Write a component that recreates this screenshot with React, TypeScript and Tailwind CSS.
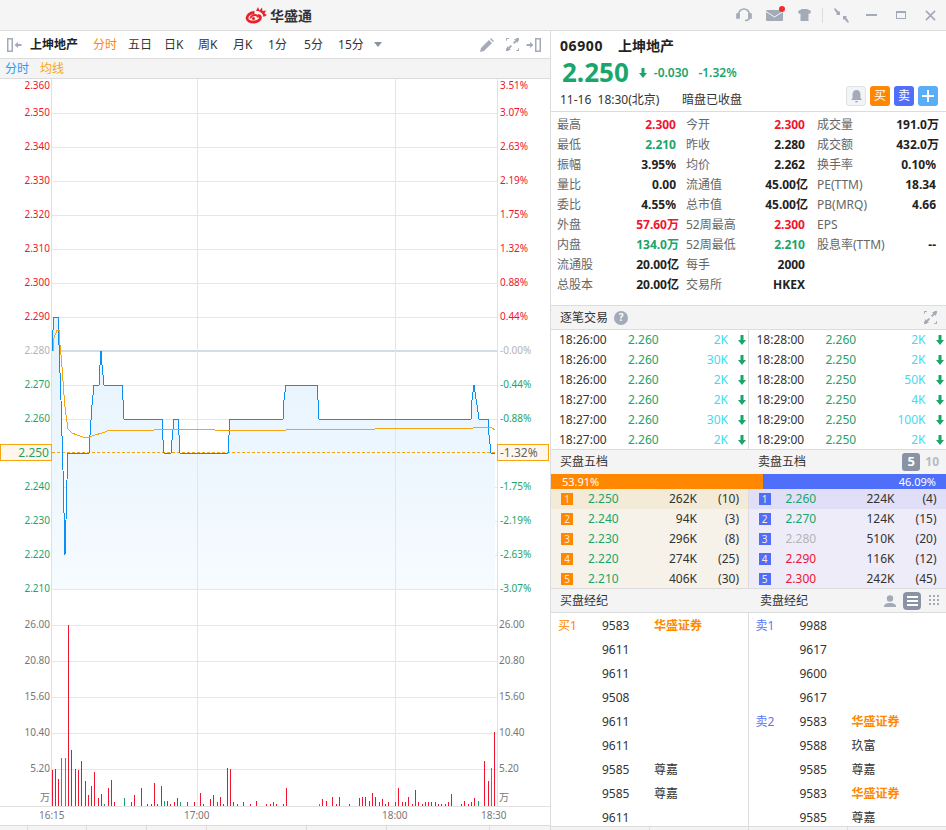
const RED = '#f0142f';
const GREEN = '#1aa56b';
const ORANGE = '#ff8800';
const BLUE = '#4f6ffb';

const priceLabels = [
  ['2.360', 86, RED], ['2.350', 113, RED], ['2.340', 147, RED], ['2.330', 181, RED], ['2.320', 215, RED],
  ['2.310', 249, RED], ['2.300', 283, RED], ['2.290', 317, RED], ['2.280', 351, '#b4b4b4'], ['2.270', 385, GREEN],
  ['2.260', 419, GREEN], ['2.240', 487, GREEN], ['2.230', 521, GREEN], ['2.220', 555, GREEN], ['2.210', 589, GREEN],
] as const;

const pctLabels = [
  ['3.51%', 86, RED], ['3.07%', 113, RED], ['2.63%', 147, RED], ['2.19%', 181, RED], ['1.75%', 215, RED],
  ['1.32%', 249, RED], ['0.88%', 283, RED], ['0.44%', 317, RED], ['-0.00%', 351, '#b4b4b4'], ['-0.44%', 385, GREEN],
  ['-0.88%', 419, GREEN], ['-1.75%', 487, GREEN], ['-2.19%', 521, GREEN], ['-2.63%', 555, GREEN], ['-3.07%', 589, GREEN],
] as const;

const volLabels = [['26.00', 625], ['20.80', 661], ['15.60', 697], ['10.40', 733], ['5.20', 769], ['万', 798]] as const;

const pricePath =
  '52,351 53,330 54,317 58,317 59,345 61,400 63,470 65,555 66,520 67,480 68,453 89,453 90,435 92,405 94,385 99,385 100,365 101,351 102,365 104,385 122,385 123,400 124,419 162,419 163,440 164,453 171,453 172,440 174,419 178,419 179,435 180,453 228,453 229,435 230,419 283,419 284,400 286,385 317,385 318,400 319,419 471,419 472,400 474,385 475,392 477,405 479,419 488,419 489,435 491,453 495,453';

const avgPath =
  '53,351 54,338 57,330 59,330 60,345 61,355 62,367 64,395 65,407 67,422 68,429 72,433 77,435 83,437 88,438 92,436 95,435 102,433 110,430 154,430 155,429 214,429 215,430 228,430 229,431 230,430 286,430 287,429 375,429 376,428 473,428 474,427 489,427 492,428 495,430';

// x, bar height above the baseline, green when true
const bars: [number, number, boolean?][] = [
  [52, 36], [55, 37], [58, 27], [61, 48, true], [65, 48, true], [68, 181], [71, 56], [75, 37], [78, 36], [81, 45], [85, 25], [88, 11], [91, 20], [94, 34],
  [98, 8], [101, 12], [104, 2, true], [108, 18], [111, 26], [114, 4], [124, 8, true], [131, 4], [134, 11], [141, 18], [147, 2], [151, 2], [154, 23], [157, 2],
  [161, 20], [164, 5, true], [167, 5], [170, 2], [174, 4], [177, 8], [180, 4, true], [187, 4], [194, 4], [200, 13], [203, 2], [210, 7], [213, 11], [217, 4],
  [220, 9], [223, 2], [227, 38], [230, 37], [233, 4], [237, 2], [243, 4], [250, 2], [256, 5], [266, 2], [270, 2], [273, 4], [276, 2], [283, 2], [286, 18],
  [319, 2, true], [322, 7], [326, 5], [332, 9], [336, 2], [339, 9], [349, 2], [359, 8], [362, 9], [365, 9], [369, 5], [372, 13], [375, 9], [379, 4], [382, 7],
  [385, 2], [388, 4], [395, 4], [398, 18], [402, 4], [405, 4], [408, 9], [412, 2], [415, 16], [418, 4], [422, 2], [425, 4], [428, 4], [431, 4], [435, 4],
  [438, 2], [441, 2], [445, 2], [448, 4], [451, 12], [461, 2], [464, 5], [468, 2], [471, 4], [474, 8], [478, 5, true], [484, 45], [488, 25], [491, 38, true], [494, 74],
];

const stats = [
  [['最高', '2.300', RED], ['今开', '2.300', RED], ['成交量', '191.0万', '']],
  [['最低', '2.210', GREEN], ['昨收', '2.280', ''], ['成交额', '432.0万', '']],
  [['振幅', '3.95%', ''], ['均价', '2.262', ''], ['换手率', '0.10%', '']],
  [['量比', '0.00', ''], ['流通值', '45.00亿', ''], ['PE(TTM)', '18.34', '']],
  [['委比', '4.55%', ''], ['总市值', '45.00亿', ''], ['PB(MRQ)', '4.66', '']],
  [['外盘', '57.60万', RED], ['52周最高', '2.300', RED], ['EPS', '', '']],
  [['内盘', '134.0万', GREEN], ['52周最低', '2.210', GREEN], ['股息率(TTM)', '--', '']],
  [['流通股', '20.00亿', ''], ['每手', '2000', ''], ['', '', '']],
  [['总股本', '20.00亿', ''], ['交易所', 'HKEX', ''], ['', '', '']],
];

const tradesLeft = [['18:26:00', '2.260', '2K'], ['18:26:00', '2.260', '30K'], ['18:26:00', '2.260', '2K'], ['18:27:00', '2.260', '2K'], ['18:27:00', '2.260', '30K'], ['18:27:00', '2.260', '2K']];
const tradesRight = [['18:28:00', '2.260', '2K'], ['18:28:00', '2.250', '2K'], ['18:28:00', '2.250', '50K'], ['18:29:00', '2.250', '4K'], ['18:29:00', '2.250', '100K'], ['18:29:00', '2.250', '2K']];

const bids = [['2.250', '262K', '(10)', GREEN], ['2.240', '94K', '(3)', GREEN], ['2.230', '296K', '(8)', GREEN], ['2.220', '274K', '(25)', GREEN], ['2.210', '406K', '(30)', GREEN]];
const asks = [['2.260', '224K', '(4)', GREEN], ['2.270', '124K', '(15)', GREEN], ['2.280', '510K', '(20)', '#b4b4b4'], ['2.290', '116K', '(12)', RED], ['2.300', '242K', '(45)', RED]];

const buyBrokers = [['买1', '9583', '华盛证券'], ['', '9611', ''], ['', '9611', ''], ['', '9508', ''], ['', '9611', ''], ['', '9611', ''], ['', '9585', '尊嘉'], ['', '9585', '尊嘉'], ['', '9611', '']];
const sellBrokers = [['卖1', '9988', ''], ['', '9617', ''], ['', '9600', ''], ['', '9617', ''], ['卖2', '9583', '华盛证券'], ['', '9588', '玖富'], ['', '9585', '尊嘉'], ['', '9583', '华盛证券'], ['', '9585', '尊嘉']];

function DownArrow() {
  return (
    <svg width="8" height="10" viewBox="0 0 8 10" fill={GREEN}>
      <path d="M2.500 0h3v5H8L4 10 0 5h2.500z" />
    </svg>
  );
}

function ExpandIcon({ size = 14 }: { size?: number }) {
  return (
    <svg width={size} height={size} viewBox="0 0 14 14" fill="#a3abb8">
      <path d="M0 0h3v1H1v2H0zM11 0h3v3h-1V1h-2zM0 11h1v2h2v1H0zM13 11h1v3h-3v-1h2z" />
      <path d="M13 1v4.500L11.500 4 9 6.500 7.500 5 10 2.500 8.500 1zM1 13V8.500L2.500 10 5 7.500 6.500 9 4 11.500 5.500 13z" />
    </svg>
  );
}

function Logo() {
  return (
    <svg width="22" height="18" viewBox="0 0 22 18" fill="none">
      <path d="M9.500 6.500C5 6.500 2 9.500 2 12c0 2.500 3 4 6.500 4 3.500 0 7-1.800 7-4.500 0-1.600-1.500-2-2.500-2.200" stroke="#e8232c" strokeWidth="2.800" />
      <path d="M5.500 12.500c0-2 2.500-3.500 4.500-3.500s2.800 1 2.500 2.500" stroke="#e8232c" strokeWidth="1.800" />
      <circle cx="8.500" cy="12.500" r="1.500" fill="#e8232c" />
      <path d="M13 1l1.500 3.500L17 1.500l.5 3.500L21 4.500l-1.500 3L22 9l-3.500 2c-.5-3-2-5-5.500-6L11 5z" fill="#e8232c" />
    </svg>
  );
}

function PriceChart() {
  return (
    <svg viewBox="0 79 550 746" className="block h-[746px] w-[550px]" fontSize="10">
      <defs>
        <linearGradient id="area" x1="0" y1="0" x2="0" y2="1">
          <stop offset="0" stopColor="#e4f2fd" />
          <stop offset="1" stopColor="#f6fbff" />
        </linearGradient>
      </defs>

      {[113, 147, 181, 215, 249, 283, 317, 385, 419, 487, 521, 555, 589, 625, 661, 697, 733, 769].map((y) => (
        <line key={y} x1="52" x2="497" y1={y + 0.5} y2={y + 0.5} stroke="#e6e6e6" />
      ))}
      <line x1="52" x2="497" y1="351" y2="351" stroke="#d3dde8" strokeWidth="2" />

      <polygon points={`52,589 ${pricePath} 495,589`} fill="url(#area)" />

      {[197.5, 395.5].map((x) => (
        <line key={x} x1={x} x2={x} y1="79" y2="806" stroke="#e2e6ea" />
      ))}
      <line x1="51.500" x2="51.500" y1="79" y2="806" stroke="#e0e0e0" />
      <line x1="497.500" x2="497.500" y1="79" y2="806" stroke="#e0e0e0" />
      <line x1="0" x2="550" y1="806.500" y2="806.500" stroke="#e0e0e0" />

      <line x1="52" x2="497" y1="452.500" y2="452.500" stroke="#f7a50e" strokeDasharray="3 2" />
      <polyline points={pricePath} fill="none" stroke="#0b8ff2" strokeWidth="1" shapeRendering="crispEdges" />
      <polyline points={avgPath} fill="none" stroke="#f7a50e" strokeWidth="1" shapeRendering="crispEdges" />

      <rect x="0.500" y="444.500" width="51" height="16" fill="#fff6ed" stroke="#f7a50e" />
      <rect x="497.500" y="444.500" width="51" height="16" fill="#fff6ed" stroke="#f7a50e" />
      <text x="49" y="457" textAnchor="end" fontSize="12" fill={GREEN}>2.250</text>
      <text x="500" y="457" fontSize="12" fill="#666">-1.32%</text>

      {priceLabels.map(([t, y, c]) => (
        <text key={t} x="50" y={y + 3} textAnchor="end" fill={c}>{t}</text>
      ))}
      {pctLabels.map(([t, y, c]) => (
        <text key={t} x="500" y={y + 3} fill={c}>{t}</text>
      ))}
      {volLabels.map(([t, y]) => (
        <text key={`l${t}`} x="50" y={y + 3} textAnchor="end" fill="#777">{t}</text>
      ))}
      {volLabels.map(([t, y]) => (
        <text key={`r${t}`} x="499" y={y + 3} fill="#777">{t}</text>
      ))}

      {bars.map(([x, h, down]) => (
        <rect key={x} x={x} y={806 - h} width="1" height={h} fill={down ? GREEN : RED} />
      ))}

      <text x="39" y="819" fontSize="10" fill="#777">16:15</text>
      <text x="184" y="819" fontSize="10" fill="#777">17:00</text>
      <text x="382" y="819" fontSize="10" fill="#777">18:00</text>
      <text x="481" y="819" fontSize="10" fill="#777">18:30</text>
    </svg>
  );
}

function TopBar() {
  return (
    <div className="relative flex h-[31px] shrink-0 items-center border-b border-[#dcdcdc] bg-[#f5f5f5]">
      <div className="ml-[245px] flex items-center gap-[3px]">
        <Logo />
        <span className="text-[14px] font-bold text-[#333]">华盛通</span>
      </div>
      <div className="ml-auto flex items-center text-[#a3abb8]">
        <svg width="16" height="16" viewBox="0 0 16 16" fill="none" stroke="currentColor" strokeWidth="1.600" className="mr-[14px]">
          <path d="M2.500 10V7.500a5.500 5.500 0 0 1 11 0V10" />
          <path d="M13.500 10c0 2.500-2 3.500-4.500 3.500" />
          <rect x="1" y="7" width="2" height="4" fill="currentColor" />
          <rect x="13" y="7" width="2" height="4" fill="currentColor" />
        </svg>
        <div className="relative mr-[15px] h-[11px] w-[17px] rounded-[1px] bg-[#a3abb8]">
          <svg width="17" height="11" viewBox="0 0 17 11" fill="none" stroke="#f5f5f5" strokeWidth="1" className="block">
            <path d="M0 1.500l8.500 5.500 8.500-5.500" />
          </svg>
          <span className="absolute right-[-2px] top-[-4px] h-[6px] w-[6px] rounded-full bg-[#f52c2c]" />
        </div>
        <svg width="13" height="12" viewBox="0 0 13 12" fill="currentColor" className="mr-[11px]">
          <path d="M4 0h5l4 2-1 3-1.500-.5V12h-8V4.500L1 5 0 2z" />
        </svg>
        <span className="mr-[11px] h-[15px] w-px bg-[#dcdcdc]" />
        <svg width="15" height="15" viewBox="0 0 15 15" fill="currentColor" className="mr-[17px]">
          <path d="M0 1l1-1 4 4 1-1v4H2l1-1zM15 14l-1 1-4-4-1 1V8h4l-1 1z" />
        </svg>
        <span className="mr-[19px] h-[2px] w-[11px] bg-[#a3abb8]" />
        <span className="mr-[19px] h-[8px] w-[10px] border border-t-2 border-[#a3abb8]" />
        <svg width="11" height="11" viewBox="0 0 12 12" stroke="currentColor" strokeWidth="1.800" className="mr-[10px]">
          <path d="M1 1l10 10M11 1L1 11" />
        </svg>
      </div>
    </div>
  );
}

function LeftPanel() {
  const tabs = [['五日', 'w-[36px]'], ['日K', 'w-[34px]'], ['周K', 'w-[35px]'], ['月K', 'w-[35px]'], ['1分', 'w-[36px]'], ['5分', 'w-[34px]'], ['15分', 'w-[33px]']];
  return (
    <div className="flex h-full w-[551px] shrink-0 flex-col border-r border-[#dcdcdc]">
      <div className="flex h-[28px] shrink-0 items-center border-b border-[#dcdcdc] pl-[7px] pr-[9px] text-[12px] text-[#333]">
        <svg width="15" height="14" viewBox="0 0 15 14" fill="#a3abb8" className="mr-[8px]">
          <path d="M0 0h6v14H0zM1.500 1.500v11h3v-11z" fillRule="evenodd" />
          <path d="M7.500 7L11 4V6h3.500V8H11v2z" />
        </svg>
        <span className="mr-[15px] font-bold text-[#222]">上坤地产</span>
        <span className="w-[35px] text-[#ff8800]">分时</span>
        {tabs.map(([t, w]) => (
          <span key={t} className={w}>{t}</span>
        ))}
        <span className="ml-[3px] h-0 w-0 border-x-[4px] border-t-[5px] border-x-transparent border-t-[#8a93a3]" />
        <svg width="14" height="14" viewBox="0 0 14 14" fill="#a3abb8" className="ml-auto mr-[12px]">
          <path d="M0 14l1-4 8-8 3 3-8 8zM10 1l1-1 3 3-1 1z" />
        </svg>
        <span className="mr-[7px]"><ExpandIcon size={13} /></span>
        <svg width="15" height="14" viewBox="0 0 15 14" fill="#a3abb8">
          <path d="M9 0h6v14H9zM10.500 1.500v11h3v-11z" fillRule="evenodd" />
          <path d="M7.500 7L4 4V6H.5V8H4v2z" />
        </svg>
      </div>
      <div className="flex h-[20px] shrink-0 items-center gap-[11px] border-b border-[#dcdcdc] bg-[#f4f4f4] pl-[5px] text-[12px]">
        <span className="text-[#2a9bf5]">分时</span>
        <span className="text-[#f7a50e]">均线</span>
      </div>
      <PriceChart />
      <div className="flex min-h-0 flex-1 border-t border-[#dcdcdc] bg-[#f4f4f4]">
        {['w-[28px]', 'w-[59px]', 'w-[60px]', 'w-[60px]', 'w-[100px]', 'w-[80px]', 'w-[103px]'].map((w) => (
          <span key={w} className={`${w} border-r border-[#dcdcdc]`} />
        ))}
      </div>
    </div>
  );
}

function SectionHead({ children }: { children: React.ReactNode }) {
  return <div className="flex shrink-0 items-center border-b border-[#dcdcdc] bg-[#f4f4f4] text-[12px] text-[#333]">{children}</div>;
}

function Trades({ rows, first }: { rows: string[][]; first?: boolean }) {
  return (
    <div className={`w-[198px] ${first ? 'border-r border-[#dcdcdc] pl-[8px]' : 'pl-[8px]'}`}>
      {rows.map((r, i) => (
        <div key={i} className="flex h-[20px] items-center text-[12px]">
          <span className="w-[69px] text-[#333]">{r[0]}</span>
          <span className="w-[40px] text-[#1aa56b]">{r[1]}</span>
          <span className="w-[60px] text-right text-[#3fdcf0]">{r[2]}</span>
          <span className="ml-[10px]"><DownArrow /></span>
        </div>
      ))}
    </div>
  );
}

function Book({ rows, sell }: { rows: string[][]; sell?: boolean }) {
  return (
    <div className={sell ? 'w-[198px] bg-[#eeecf9]' : 'w-[198px] border-r border-[#dcdcdc] bg-[#f6f2ea]'}>
      {rows.map((r, i) => (
        <div
          key={i}
          className={`flex h-[20px] items-center pl-[10px] text-[12px] text-[#333] ${i === 0 ? (sell ? 'bg-[#e1def7]' : 'bg-[#f3ebd8]') : ''}`}
        >
          <span
            className={`flex h-[12px] w-[12px] items-center justify-center text-[10px] text-[#ffe9cc] ${sell ? 'bg-[#4f6ffb]' : 'bg-[#ff8800]'}`}
          >
            {i + 1}
          </span>
          <span className="ml-[15px] w-[40px]" style={{ color: r[3] }}>{r[0]}</span>
          <span className="w-[69px] text-right">{r[1]}</span>
          <span className="w-[42px] text-right">{r[2]}</span>
        </div>
      ))}
    </div>
  );
}

function Brokers({ rows, sell }: { rows: string[][]; sell?: boolean }) {
  return (
    <div className={sell ? 'w-[198px] pl-[7px] pt-[1px]' : 'w-[198px] border-r border-[#dcdcdc] pl-[7px] pt-[1px]'}>
      {rows.map((r, i) => (
        <div key={i} className="flex h-[24px] items-center text-[12px] text-[#333]">
          <span className={`w-[44px] ${sell ? 'text-[#5a78fb]' : 'text-[#ff8800]'}`}>{r[0]}</span>
          <span className="w-[52px]">{r[1]}</span>
          <span className={r[2] === '华盛证券' ? 'font-bold text-[#ff8800]' : ''}>{r[2]}</span>
        </div>
      ))}
    </div>
  );
}

const statPad = ['pr-[10px]', 'pr-[12px]', 'pr-[2px]'];

function RightPanel() {
  return (
    <div className="flex h-full min-w-0 flex-1 flex-col">
      <div className="relative h-[81px] shrink-0 border-b border-[#dcdcdc] pl-[9px]">
        <div className="flex h-[29px] items-center gap-[15px] text-[14px] font-bold text-[#222]">
          <span className="tracking-[0.6px]">06900</span>
          <span>上坤地产</span>
        </div>
        <div className="-mt-[1px] flex h-[25px] items-center pl-[2px] text-[#1aa56b]">
          <span className="text-[26px] font-bold leading-none">2.250</span>
          <span className="ml-[10px] mr-[7px] mt-[3px]"><DownArrow /></span>
          <span className="mt-[3px] text-[12px] font-semibold">-0.030</span>
          <span className="ml-[10px] mt-[3px] text-[12px] font-semibold">-1.32%</span>
        </div>
        <div className="mt-[6px] flex h-[20px] items-center text-[12px] text-[#333]">
          <span className="w-[122px]">11-16&nbsp; 18:30(北京)</span>
          <span>暗盘已收盘</span>
        </div>
        <div className="absolute right-[8px] top-[55px] flex gap-[4px]">
          <span className="flex h-[20px] w-[20px] items-center justify-center rounded-[3px] border border-[#dfe3e8] bg-[#f3f4f6]">
            <svg width="11" height="13" viewBox="0 0 11 13" fill="#a3abb8">
              <path d="M5.500 0C3 0 1.500 2 1.500 4.500V8L0 10h11L9.500 8V4.500C9.500 2 8 0 5.500 0zM4 11h3a1.500 1.500 0 0 1-3 0z" />
            </svg>
          </span>
          <span className="flex h-[20px] w-[20px] items-center justify-center rounded-[3px] bg-[#ff8800] text-[12px] text-white">买</span>
          <span className="flex h-[20px] w-[20px] items-center justify-center rounded-[3px] bg-[#4f6ffb] text-[12px] text-white">卖</span>
          <span className="flex h-[20px] w-[20px] items-center justify-center rounded-[3px] bg-[#5aaef8]">
            <svg width="12" height="12" viewBox="0 0 12 12" fill="white"><path d="M5 0h2v5h5v2H7v5H5V7H0V5h5z" /></svg>
          </span>
        </div>
      </div>

      <div className="h-[194px] shrink-0 border-b border-[#dcdcdc] pl-[6px] pt-[3px]">
        {stats.map((row, i) => (
          <div key={i} className="grid h-[20px] grid-cols-[129px_131px_121px] items-center text-[12px]">
            {row.map((c, j) => (
              <div key={j} className={`flex justify-between ${statPad[j]}`}>
                <span className="text-[#666]">{c[0]}</span>
                <span
                  className={`font-bold text-[#222] ${/[万亿]$/.test(c[1]) ? '-mr-[3px]' : ''}`}
                  style={c[2] ? { color: c[2] } : undefined}
                >
                  {c[1]}
                </span>
              </div>
            ))}
          </div>
        ))}
      </div>

      <SectionHead>
        <div className="flex h-[23px] w-full items-center pl-[9px] pr-[9px]">
          <span>逐笔交易</span>
          <span className="ml-[6px] flex h-[14px] w-[14px] items-center justify-center rounded-full bg-[#a3abb8] text-[10px] font-bold text-white">?</span>
          <span className="ml-auto"><ExpandIcon size={13} /></span>
        </div>
      </SectionHead>
      <div className="flex h-[120px] shrink-0 border-b border-[#dcdcdc]">
        <Trades rows={tradesLeft} first />
        <Trades rows={tradesRight} />
      </div>

      <div className="flex h-[24px] shrink-0 items-center bg-[#f4f4f4] pl-[9px] pr-[7px] text-[12px] text-[#333]">
        <span className="w-[198px]">买盘五档</span>
        <span>卖盘五档</span>
        <span className="ml-auto flex h-[18px] w-[18px] items-center justify-center rounded-[3px] bg-[#8a93a3] text-[13px] font-bold text-white">5</span>
        <span className="ml-[5px] text-[12px] font-bold text-[#b4bac4]">10</span>
      </div>
      <div className="flex h-[15px] shrink-0 text-[11px] leading-[15px] text-white">
        <span className="w-[212px] bg-[#ff8800] pl-[11px]">53.91%</span>
        <span className="flex-1 bg-[#4f6ffb] pr-[10px] text-right">46.09%</span>
      </div>
      <div className="flex h-[100px] shrink-0 border-b border-[#dcdcdc] bg-[#eeecf9]">
        <Book rows={bids} />
        <Book rows={asks} sell />
      </div>

      <SectionHead>
        <div className="flex h-[23px] w-full items-center pl-[9px] pr-[6px]">
          <span className="w-[200px]">买盘经纪</span>
          <span>卖盘经纪</span>
          <svg width="12" height="12" viewBox="0 0 12 12" fill="#a3abb8" className="ml-auto mr-[7px]">
            <circle cx="6" cy="3.500" r="3.200" />
            <path d="M0 12c0-3 2-4 6-4s6 1 6 4z" />
          </svg>
          <span className="mr-[8px] flex h-[18px] w-[18px] flex-col items-center justify-center gap-[2px] rounded-[4px] bg-[#8a93a3]">
            <span className="h-[2px] w-[11px] bg-white" />
            <span className="h-[2px] w-[11px] bg-white" />
            <span className="h-[2px] w-[11px] bg-white" />
          </span>
          <svg width="11" height="11" viewBox="0 0 11 11" fill="#a3abb8">
            <path d="M0 0h2v2H0zM4 0h2v2H4zM8 0h2v2H8zM0 4h2v2H0zM4 4h2v2H4zM8 4h2v2H8zM0 8h2v2H0zM4 8h2v2H4zM8 8h2v2H8z" />
          </svg>
        </div>
      </SectionHead>
      <div className="flex h-[213px] shrink-0 overflow-hidden">
        <Brokers rows={buyBrokers} />
        <Brokers rows={sellBrokers} sell />
      </div>
      <div className="flex min-h-0 flex-1 border-t border-[#dcdcdc] bg-[#f4f4f4]">
        <span className="w-[99px] border-r border-[#dcdcdc]" />
        <span className="w-[99px] border-r border-[#dcdcdc]" />
        <span className="w-[99px] border-r border-[#dcdcdc]" />
      </div>
    </div>
  );
}

export default function App() {
  return (
    <div className="flex h-[830px] w-[946px] flex-col overflow-hidden bg-white [font-family:'Noto_Sans','Noto_Sans_CJK_SC',sans-serif]">
      <TopBar />
      <div className="flex min-h-0 flex-1">
        <LeftPanel />
        <RightPanel />
      </div>
    </div>
  );
}
